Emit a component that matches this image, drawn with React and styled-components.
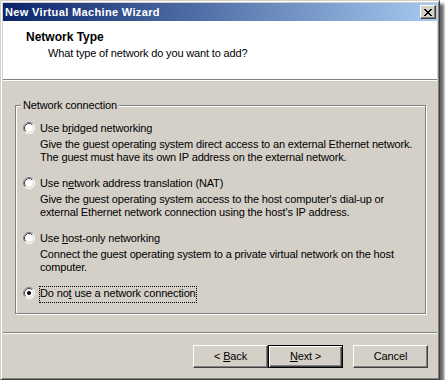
import React from "react";
import styled, { createGlobalStyle, css } from "styled-components";

const Global = createGlobalStyle`
  html, body { margin: 0; padding: 0; background: #ffffff; }
  body {
    font-family: "Liberation Sans", Arial, sans-serif;
    font-size: 11px;
    letter-spacing: -0.15px;
    color: #000;
  }
  * { box-sizing: border-box; }
`;

const Window = styled.div`
  width: 440px;
  height: 380px;
  background: #d4d0c8;
  border: 1px solid;
  border-color: #d4d0c8 #404040 #404040 #d4d0c8;
  box-shadow: inset 1px 1px #ffffff, inset -1px -1px #808080, 4px 4px 3px rgba(0, 0, 0, 0.6);
  padding: 2px;
  display: flex;
  flex-direction: column;
`;

const TitleBar = styled.div`
  height: 18px;
  flex: none;
  background: linear-gradient(to right, #0a246a, #a6caf0);
  display: flex;
  align-items: center;
  justify-content: space-between;
  padding: 0 1px 0 2px;
`;

const TitleText = styled.span`
  color: #ffffff;
  font-weight: bold;
  font-size: 11px;
  letter-spacing: 0.35px;
  line-height: 13px;
`;

const CaptionButton = styled.div`
  width: 16px;
  height: 14px;
  background: #d4d0c8;
  border: 1px solid;
  border-color: #ffffff #404040 #404040 #ffffff;
  box-shadow: inset -1px -1px #808080, inset 1px 1px #d4d0c8;
  display: flex;
  align-items: center;
  justify-content: center;
`;

const Header = styled.div`
  height: 58px;
  flex: none;
  background: #ffffff;
  padding: 10px 0 0 23px;
`;

const HeaderTitle = styled.div`
  font-weight: bold;
  font-size: 12px;
  letter-spacing: 0;
  line-height: 13px;
`;

const HeaderSub = styled.div`
  line-height: 13px;
  margin-top: 3px;
  padding-left: 22px;
`;

const EtchedLine = styled.div`
  height: 2px;
  flex: none;
  border-top: 1px solid #808080;
  border-bottom: 1px solid #ffffff;
`;

const Body = styled.div`
  padding: 24px 0 18px 12px;
`;

const GroupBox = styled.div`
  position: relative;
  width: 411px;
  height: 209px;
  border: 1px solid #808080;
  box-shadow: inset 1px 1px #ffffff, 1px 1px #ffffff;
  padding: 16px 0 0 7px;
`;

const GroupLabel = styled.span`
  position: absolute;
  top: -7px;
  left: 5px;
  padding: 0 2px;
  line-height: 13px;
  background: #d4d0c8;
`;

const OptionList = styled.div`
  display: flex;
  flex-direction: column;
  gap: 13px;
`;

const Option = styled.div`
  display: grid;
  grid-template-columns: 12px auto;
  column-gap: 5px;
  justify-content: start;
`;

const RadioBox = styled.div`
  width: 12px;
  height: 12px;
  display: flex;
`;

const OptionLabel = styled.span`
  line-height: 13px;
  justify-self: start;
  ${(p) =>
    p.$focused &&
    css`
      outline: 1px dotted #000;
      outline-offset: 0;
      padding-bottom: 2px;
    `}
`;

const Description = styled.div`
  grid-column: 2;
  margin-top: 3px;
  line-height: 13px;
  white-space: nowrap;
`;

const Footer = styled.div`
  display: flex;
  justify-content: flex-end;
  padding: 11px 9px 0 0;
`;

const Button = styled.div`
  width: 75px;
  height: 23px;
  display: flex;
  align-items: center;
  justify-content: center;
  white-space: pre;
  background: #d4d0c8;
  border: 1px solid;
  border-color: #ffffff #404040 #404040 #ffffff;
  box-shadow: inset -1px -1px #808080, inset 1px 1px #d4d0c8;
  margin-left: ${(p) => p.$gap || 0}px;
  line-height: 13px;
  ${(p) =>
    p.$default &&
    css`
      border-color: #000;
      box-shadow: inset 1px 1px #ffffff, inset -1px -1px #404040, inset -2px -2px #808080;
    `}
`;

function CloseGlyph() {
  const rows = [];
  for (let i = 0; i < 7; i++) {
    rows.push(<rect key={"a" + i} x={i} y={i} width={2} height={1} />);
    rows.push(<rect key={"b" + i} x={6 - i} y={i} width={2} height={1} />);
  }
  return (
    <svg width="8" height="7" viewBox="0 0 8 7" shapeRendering="crispEdges" fill="#000">
      {rows}
    </svg>
  );
}

function Radio({ checked }) {
  return (
    <RadioBox>
      <svg width="12" height="12" viewBox="0 0 12 12">
        <circle cx="6" cy="6" r="5.5" fill="#ffffff" />
        <path d="M2.11 9.89 A5.5 5.5 0 0 1 9.89 2.11" fill="none" stroke="#808080" strokeWidth="1" />
        <path d="M9.89 2.11 A5.5 5.5 0 0 1 2.11 9.89" fill="none" stroke="#ffffff" strokeWidth="1" />
        <path d="M2.82 9.18 A4.5 4.5 0 0 1 9.18 2.82" fill="none" stroke="#404040" strokeWidth="1" />
        <path d="M9.18 2.82 A4.5 4.5 0 0 1 2.82 9.18" fill="none" stroke="#d4d0c8" strokeWidth="1" />
        {checked && <circle cx="6" cy="6" r="2" fill="#000" />}
      </svg>
    </RadioBox>
  );
}

const options = [
  {
    label: (
      <>
        {"Use b"}
        <u>r</u>
        {"idged networking"}
      </>
    ),
    desc: [
      "Give the guest operating system direct access to an external Ethernet network.",
      "The guest must have its own IP address on the external network.",
    ],
  },
  {
    label: (
      <>
        {"Use n"}
        <u>e</u>
        {"twork address translation (NAT)"}
      </>
    ),
    desc: [
      "Give the guest operating system access to the host computer's dial-up or",
      "external Ethernet network connection using the host's IP address.",
    ],
  },
  {
    label: (
      <>
        {"Use "}
        <u>h</u>
        {"ost-only networking"}
      </>
    ),
    desc: [
      "Connect the guest operating system to a private virtual network on the host",
      "computer.",
    ],
  },
  {
    label: (
      <>
        {"Do no"}
        <u>t</u>
        {" use a network connection"}
      </>
    ),
    desc: null,
    checked: true,
  },
];

export default function App() {
  return (
    <>
      <Global />
      <Window>
        <TitleBar>
          <TitleText>New Virtual Machine Wizard</TitleText>
          <CaptionButton>
            <CloseGlyph />
          </CaptionButton>
        </TitleBar>
        <Header>
          <HeaderTitle>Network Type</HeaderTitle>
          <HeaderSub>What type of network do you want to add?</HeaderSub>
        </Header>
        <EtchedLine />
        <Body>
          <GroupBox>
            <GroupLabel>Network connection</GroupLabel>
            <OptionList>
              {options.map((o, i) => (
                <Option key={i}>
                  <Radio checked={o.checked} />
                  <OptionLabel $focused={o.checked}>{o.label}</OptionLabel>
                  {o.desc && (
                    <Description>
                      {o.desc[0]}
                      <br />
                      {o.desc[1]}
                    </Description>
                  )}
                </Option>
              ))}
            </OptionList>
          </GroupBox>
        </Body>
        <EtchedLine />
        <Footer>
          <Button>
            {"< "}
            <u>B</u>
            {"ack"}
          </Button>
          <Button $default>
            <u>N</u>
            {"ext >"}
          </Button>
          <Button $gap={10}>Cancel</Button>
        </Footer>
      </Window>
    </>
  );
}
